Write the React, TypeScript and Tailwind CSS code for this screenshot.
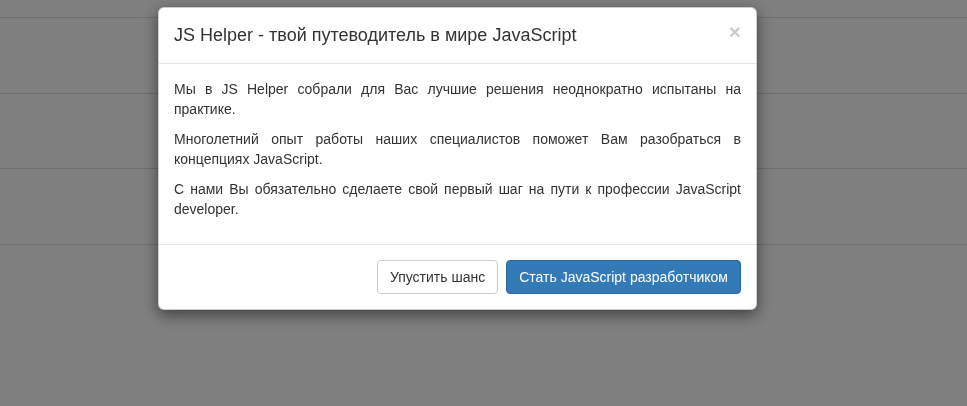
import * as React from 'react';

const paragraphs = [
  'Мы в JS Helper собрали для Вас лучшие решения неоднократно испытаны на практике.',
  'Многолетний опыт работы наших специалистов поможет Вам разобраться в концепциях JavaScript.',
  'С нами Вы обязательно сделаете свой первый шаг на пути к профессии JavaScript developer.',
];

// Page rows that show through the backdrop
function PageBehind() {
  return (
    <div className="bg-white h-[406px] overflow-hidden">
      <div className="h-[18px] border-b border-[#dddddd]" />
      {[0, 1, 2].map(i => (
        <div key={i} className="h-[75.5px] border-b border-[#dddddd]" />
      ))}
    </div>
  );
}

function Modal() {
  return (
    <div className="ml-[158px] mt-[7px] w-[599px] bg-white border border-black/20 rounded-[6px] shadow-[0_5px_15px_rgba(0,0,0,0.5)] text-[#333333]">
      <div className="flex items-start justify-between px-[15px] py-[15px] border-b border-[#e5e5e5]">
        <h4 className="text-[18px] leading-[25px] font-normal">JS Helper - твой путеводитель в мире JavaScript</h4>
        <button className="text-[21px] font-bold leading-none text-black opacity-20 -mt-[2px]">×</button>
      </div>
      <div className="p-[15px] text-[14px] leading-[20px] text-justify">
        {paragraphs.map((p, i) => (
          <p key={i} className="mb-[10px]">{p}</p>
        ))}
      </div>
      <div className="flex justify-end gap-[8px] p-[15px] border-t border-[#e5e5e5]">
        <button className="px-[12px] py-[6px] text-[14px] leading-[20px] border border-[#cccccc] rounded-[4px] bg-white text-[#333333]">
          Упустить шанс
        </button>
        <button className="px-[12px] py-[6px] text-[14px] leading-[20px] border border-[#2e6da4] rounded-[4px] bg-[#337ab7] text-white">
          Стать JavaScript разработчиком
        </button>
      </div>
    </div>
  );
}

export default function App() {
  return (
    <div className="relative h-[406px] overflow-hidden font-['Liberation_Sans',Arial,sans-serif]">
      <PageBehind />
      <div className="fixed inset-0 bg-black/50" />
      <div className="fixed inset-0 overflow-hidden">
        <Modal />
      </div>
    </div>
  );
}
